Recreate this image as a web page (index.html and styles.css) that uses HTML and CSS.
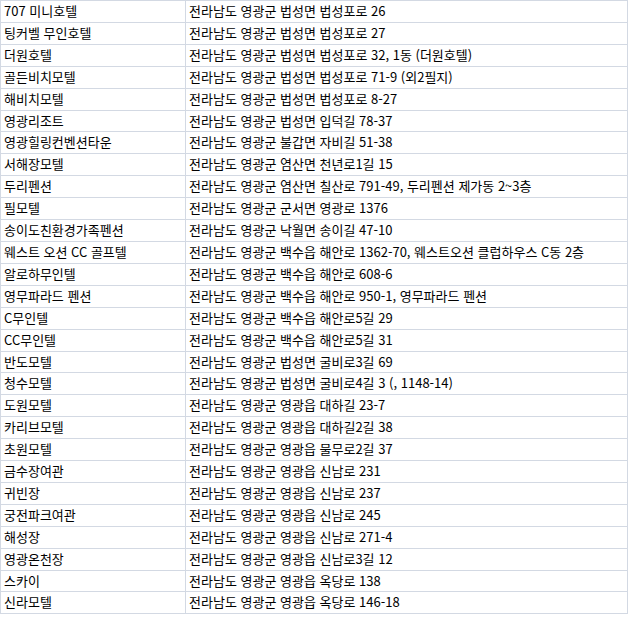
FILE: index.html
```html
<!DOCTYPE html>
<html lang="ko">
<head>
<meta charset="utf-8">
<link rel="stylesheet" href="styles.css">
</head>
<body>
<table class="list">
<tbody>
<tr><td class="name">707 미니호텔</td><td class="addr">전라남도 영광군 법성면 법성포로 26</td></tr>
<tr><td class="name">팅커벨 무인호텔</td><td class="addr">전라남도 영광군 법성면 법성포로 27</td></tr>
<tr><td class="name">더원호텔</td><td class="addr">전라남도 영광군 법성면 법성포로 32, 1동 (더원호텔)</td></tr>
<tr><td class="name">골든비치모텔</td><td class="addr">전라남도 영광군 법성면 법성포로 71-9 (외2필지)</td></tr>
<tr><td class="name">해비치모텔</td><td class="addr">전라남도 영광군 법성면 법성포로 8-27</td></tr>
<tr><td class="name">영광리조트</td><td class="addr">전라남도 영광군 법성면 입덕길 78-37</td></tr>
<tr><td class="name">영광힐링컨벤션타운</td><td class="addr">전라남도 영광군 불갑면 자비길 51-38</td></tr>
<tr><td class="name">서해장모텔</td><td class="addr">전라남도 영광군 염산면 천년로1길 15</td></tr>
<tr><td class="name">두리펜션</td><td class="addr">전라남도 영광군 염산면 칠산로 791-49, 두리펜션 제가동 2~3층</td></tr>
<tr><td class="name">필모텔</td><td class="addr">전라남도 영광군 군서면 영광로 1376</td></tr>
<tr><td class="name">송이도친환경가족펜션</td><td class="addr">전라남도 영광군 낙월면 송이길 47-10</td></tr>
<tr><td class="name">웨스트 오션 CC 골프텔</td><td class="addr">전라남도 영광군 백수읍 해안로 1362-70, 웨스트오션 클럽하우스 C동 2층</td></tr>
<tr><td class="name">알로하무인텔</td><td class="addr">전라남도 영광군 백수읍 해안로 608-6</td></tr>
<tr><td class="name">영무파라드 펜션</td><td class="addr">전라남도 영광군 백수읍 해안로 950-1, 영무파라드 펜션</td></tr>
<tr><td class="name">C무인텔</td><td class="addr">전라남도 영광군 백수읍 해안로5길 29</td></tr>
<tr><td class="name">CC무인텔</td><td class="addr">전라남도 영광군 백수읍 해안로5길 31</td></tr>
<tr><td class="name">반도모텔</td><td class="addr">전라남도 영광군 법성면 굴비로3길 69</td></tr>
<tr><td class="name">청수모텔</td><td class="addr">전라남도 영광군 법성면 굴비로4길 3 (, 1148-14)</td></tr>
<tr><td class="name">도원모텔</td><td class="addr">전라남도 영광군 영광읍 대하길 23-7</td></tr>
<tr><td class="name">카리브모텔</td><td class="addr">전라남도 영광군 영광읍 대하길2길 38</td></tr>
<tr><td class="name">초원모텔</td><td class="addr">전라남도 영광군 영광읍 물무로2길 37</td></tr>
<tr><td class="name">금수장여관</td><td class="addr">전라남도 영광군 영광읍 신남로 231</td></tr>
<tr><td class="name">귀빈장</td><td class="addr">전라남도 영광군 영광읍 신남로 237</td></tr>
<tr><td class="name">궁전파크여관</td><td class="addr">전라남도 영광군 영광읍 신남로 245</td></tr>
<tr><td class="name">해성장</td><td class="addr">전라남도 영광군 영광읍 신남로 271-4</td></tr>
<tr><td class="name">영광온천장</td><td class="addr">전라남도 영광군 영광읍 신남로3길 12</td></tr>
<tr><td class="name">스카이</td><td class="addr">전라남도 영광군 영광읍 옥당로 138</td></tr>
<tr><td class="name">신라모텔</td><td class="addr">전라남도 영광군 영광읍 옥당로 146-18</td></tr>
</tbody>
</table>
</body>
</html>
```

FILE: styles.css
```css
html, body {
  margin: 0;
  padding: 0;
  background: #ffffff;
}
body {
  font-family: "Noto Sans CJK KR", "Noto Sans", sans-serif;
  font-size: 13px;
  color: #000000;
}
.list {
  border-collapse: collapse;
  width: 628px;
  table-layout: fixed;
}
.list td {
  border: 1px solid #d3d9e3;
  height: 20.9px;
  padding: 0 3px;
  line-height: 20.9px;
  white-space: nowrap;
  vertical-align: middle;
}
.list .name {
  width: 178px;
}
```
